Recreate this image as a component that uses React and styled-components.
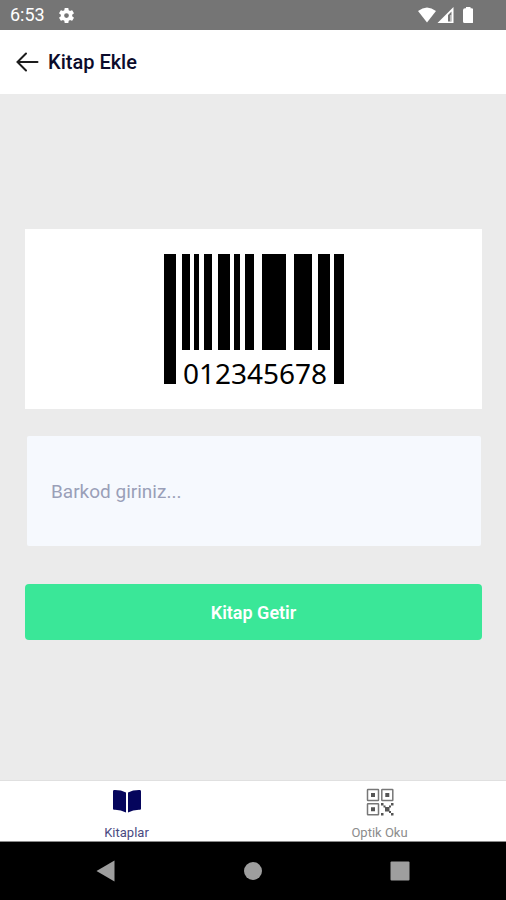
import React, { useState } from 'react';
import styled, { createGlobalStyle } from 'styled-components';

const GlobalStyle = createGlobalStyle`
  * {
    box-sizing: border-box;
  }

  body {
    margin: 0;
    font-family: Roboto, 'Liberation Sans', sans-serif;
    background-color: #ebebeb;
  }
`;

const Screen = styled.div`
  display: flex;
  flex-direction: column;
  min-height: 100vh;
`;

const StatusBar = styled.div`
  display: flex;
  align-items: center;
  height: 30px;
  padding: 0 33px 0 10px;
  background-color: #757575;
  color: #ffffff;
`;

const Clock = styled.span`
  font-size: 18px;
  line-height: 32px;
  margin-right: 12px;
`;

const StatusIcons = styled.div`
  display: flex;
  align-items: center;
  margin-left: auto;
`;

const Header = styled.header`
  display: flex;
  align-items: center;
  gap: 9px;
  height: 64px;
  padding: 0 15px;
  background-color: #ffffff;
`;

const BackButton = styled.button`
  display: flex;
  padding: 0;
  border: none;
  background: none;
  cursor: pointer;
`;

const Title = styled.h1`
  margin: 0;
  font-size: 20px;
  font-weight: 500;
  line-height: 24px;
  color: #0b0b2b;
`;

const Content = styled.form`
  flex: 1;
  display: flex;
  flex-direction: column;
  justify-content: center;
  padding: 0 24px 5px 25px;
`;

const BarcodeCard = styled.div`
  display: flex;
  justify-content: center;
  padding: 25px 0;
  background-color: #ffffff;
`;

const BarcodeInput = styled.input`
  height: 110px;
  margin: 27px 1px 38px 2px;
  padding: 0 24px;
  border: none;
  border-radius: 2px;
  background-color: #f6f9fe;
  font-family: inherit;
  font-size: 19px;
  color: #0b0b2b;

  &::placeholder {
    color: #9a9fb8;
    opacity: 1;
  }
`;

const SubmitButton = styled.button`
  height: 56px;
  border: none;
  border-radius: 4px;
  background-color: #3ae798;
  color: #ffffff;
  font-family: inherit;
  font-size: 18px;
  font-weight: 600;
  cursor: pointer;
`;

const TabBar = styled.nav`
  display: flex;
  height: 62px;
  border-top: 1px solid #e0e0e0;
  border-bottom: 1px solid #8a8a8a;
  background-color: #ffffff;
`;

const Tab = styled.a`
  flex: 1;
  display: flex;
  flex-direction: column;
  align-items: center;
  justify-content: space-between;
  padding-top: 7px;
  font-size: 13px;
  line-height: 16px;
  text-decoration: none;
  color: ${(props) => (props.$active ? '#4a4a82' : '#8c8c8c')};
`;

const SystemBar = styled.div`
  display: flex;
  align-items: center;
  justify-content: space-between;
  height: 58px;
  padding: 0 19%;
  background-color: #000000;
`;

const SystemButton = styled.button`
  display: flex;
  padding: 0;
  border: none;
  background: none;
`;

const BarcodeSvg = styled.svg`
  overflow: visible;
`;

// x, width, height
const bars = [
  [0, 12, 130],
  [18, 8, 96],
  [30, 5, 96],
  [40, 8, 96],
  [54, 12, 96],
  [70, 6, 96],
  [81, 9, 96],
  [98, 24, 96],
  [130, 18, 96],
  [154, 12, 96],
  [170, 10, 130],
];

function Barcode() {
  return (
    <BarcodeSvg width="180" height="130" viewBox="0 0 180 130">
      {bars.map(([x, width, height]) => (
        <rect key={x} x={x} width={width} height={height} fill="#000000" />
      ))}
      <text x="91" y="130" textAnchor="middle" fontFamily="'Noto Sans', sans-serif" fontSize="28">
        012345678
      </text>
    </BarcodeSvg>
  );
}

function GearIcon() {
  return (
    <svg width="19" height="19" viewBox="0 0 24 24" fill="#ffffff">
      <path d="M19.14 12.94c.04-.3.06-.61.06-.94s-.02-.64-.07-.94l2.03-1.58a.49.49 0 0 0 .12-.61l-1.92-3.32a.49.49 0 0 0-.59-.22l-2.39.96a7 7 0 0 0-1.62-.94l-.36-2.54a.48.48 0 0 0-.48-.41h-3.84a.48.48 0 0 0-.47.41l-.36 2.54c-.59.24-1.13.57-1.62.94l-2.39-.96a.48.48 0 0 0-.59.22L2.74 8.87a.48.48 0 0 0 .12.61l2.03 1.58a6 6 0 0 0 0 1.88l-2.03 1.58a.49.49 0 0 0-.12.61l1.92 3.32c.12.22.37.29.59.22l2.39-.96c.5.38 1.03.7 1.62.94l.36 2.54c.05.24.24.41.48.41h3.84c.24 0 .44-.17.47-.41l.36-2.54a7 7 0 0 0 1.62-.94l2.39.96c.22.08.47 0 .59-.22l1.92-3.32a.48.48 0 0 0-.12-.61zM12 15a3 3 0 1 1 0-6 3 3 0 0 1 0 6z" />
    </svg>
  );
}

function SignalIcons() {
  return (
    <svg width="56" height="18" viewBox="0 0 56 18" fill="#ffffff">
      <path d="M1 5Q10 -2 19 5L10 16.500z" />
      <path fillRule="evenodd" d="M20.500 17L36.500 1V17zM31 9V15.500H34.500V5.500z" />
      <path d="M33 9h1.500v6.500H33z" fillOpacity="0.5" />
      <path d="M49 1h4.500v1.200h1q2 0 2 2V15.500q0 1.500-1.500 1.500h-7.500q-1.500 0-1.500-1.500V4.200q0-2 2-2h1z" />
    </svg>
  );
}

function BackIcon() {
  return (
    <svg width="24" height="22" viewBox="0 0 24 22" fill="none" stroke="#1c1c1c" strokeWidth="2" strokeLinecap="round">
      <path d="M11 2.500L2.500 11L11 19.500M2.500 11H22.500" />
    </svg>
  );
}

function BookIcon() {
  return (
    <svg width="28" height="26" viewBox="0 0 28 26" fill="#05055c">
      <path d="M0 3.500q0-1.500 1.500-1.400Q8 2 13 4.500V24.500Q7.500 21.500 1 21.800Q0 21.800 0 20.800z" />
      <path d="M28 3.500q0-1.500-1.500-1.400Q20 2 15 4.500V24.500Q20.500 21.500 27 21.800Q28 21.800 28 20.800z" />
    </svg>
  );
}

function QrIcon() {
  return (
    <svg width="28" height="28" viewBox="0 0 28 28" fill="#555555">
      <g fill="none" stroke="#777777" strokeWidth="1.500">
        <rect x="1.500" y="1.500" width="11" height="11" rx="0.500" />
        <rect x="15.800" y="1.500" width="11" height="11" rx="0.500" />
        <rect x="1.500" y="15.800" width="11" height="11" rx="0.500" />
      </g>
      <path d="M5 5h4v4H5zM19.300 5h4v4h-4zM5 19.300h4v4H5z" />
      <path d="M15 15h2.500v2.500H15zM25 15h2.500v2.500H25zM17.500 17.500h2v2h-2zM23 17.500h2v2h-2zM19 19h4.500v4.500H19zM15 25h2.500v2.500H15zM23 23h2v2h-2zM25 25h2.500v2.500H25z" />
    </svg>
  );
}

function App() {
  const [barcode, setBarcode] = useState('');

  return (
    <>
      <GlobalStyle />
      <Screen>
        <StatusBar>
          <Clock>6:53</Clock>
          <GearIcon />
          <StatusIcons>
            <SignalIcons />
          </StatusIcons>
        </StatusBar>
        <Header>
          <BackButton type="button" aria-label="Geri">
            <BackIcon />
          </BackButton>
          <Title>Kitap Ekle</Title>
        </Header>
        <Content onSubmit={(e) => e.preventDefault()}>
          <BarcodeCard>
            <Barcode />
          </BarcodeCard>
          <BarcodeInput
            type="text"
            aria-label="Barkod"
            value={barcode}
            onChange={(e) => setBarcode(e.target.value)}
            placeholder="Barkod giriniz..."
          />
          <SubmitButton type="submit">Kitap Getir</SubmitButton>
        </Content>
        <TabBar>
          <Tab href="#kitaplar" $active>
            <BookIcon />
            Kitaplar
          </Tab>
          <Tab href="#optik-oku">
            <QrIcon />
            Optik Oku
          </Tab>
        </TabBar>
        <SystemBar>
          <SystemButton type="button" aria-label="Geri">
            <svg width="19" height="22" viewBox="0 0 19 22">
              <path d="M18.500 0.500V21.500L0.500 11z" fill="#9e9e9e" />
            </svg>
          </SystemButton>
          <SystemButton type="button" aria-label="Ana ekran">
            <svg width="20" height="20" viewBox="0 0 20 20">
              <circle cx="10" cy="10" r="9" fill="#9e9e9e" />
            </svg>
          </SystemButton>
          <SystemButton type="button" aria-label="Son uygulamalar">
            <svg width="20" height="20" viewBox="0 0 20 20">
              <rect x="0.500" y="0.500" width="19" height="19" rx="1" fill="#9e9e9e" />
            </svg>
          </SystemButton>
        </SystemBar>
      </Screen>
    </>
  );
}

export default App;
